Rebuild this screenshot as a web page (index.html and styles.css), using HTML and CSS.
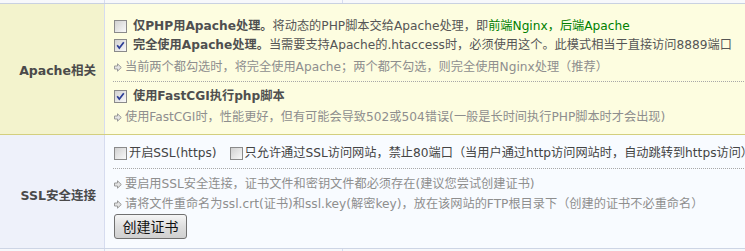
FILE: index.html
```html
<!DOCTYPE html>
<html>
<head>
<meta charset="utf-8">
<link rel="stylesheet" href="styles.css">
</head>
<body>
<div class="table">
  <div class="stub"><div class="s1"></div><div class="s2"></div><div class="s3"></div></div>

  <div class="row apache">
    <div class="label">Apache相关</div>
    <div class="content">
      <div class="group g1">
        <div class="line"><span class="cb"><svg width="13" height="13" viewBox="0 0 13 13"><defs><linearGradient id="cbg" x1="0" y1="0" x2="1" y2="1"><stop offset="0" stop-color="#cfcfcf"/><stop offset="1" stop-color="#fbfbfb"/></linearGradient></defs><rect x="0.5" y="0.5" width="12" height="12" fill="url(#cbg)" stroke="#8a8a8a"/></svg></span><b>仅PHP用Apache处理。</b>将动态的PHP脚本交给Apache处理，即<span class="green">前端Nginx，后端Apache</span></div>
        <div class="line"><span class="cb"><svg width="13" height="13" viewBox="0 0 13 13"><rect x="0.5" y="0.5" width="12" height="12" fill="url(#cbg)" stroke="#8a8a8a"/><path d="M3.2 6.3 L5.3 9 L9.8 3.3" fill="none" stroke="#2b3d96" stroke-width="1.7"/></svg></span><b>完全使用Apache处理。</b>当需要支持Apache的.htaccess时，必须使用这个。此模式相当于直接访问8889端口</div>
        <div class="hint first"><span class="arr"><svg width="8" height="9" viewBox="0 0 8 9"><path d="M0.5 3 H3.5 V0.8 L7.3 4.5 L3.5 8.2 V6 H0.5 Z" fill="#e4e4e4" stroke="#9a9a9a" stroke-width="1"/></svg></span>当前两个都勾选时，将完全使用Apache；两个都不勾选，则完全使用Nginx处理（推荐）</div>
      </div>
      <div class="group g2">
        <div class="line"><span class="cb"><svg width="13" height="13" viewBox="0 0 13 13"><rect x="0.5" y="0.5" width="12" height="12" fill="url(#cbg)" stroke="#8a8a8a"/><path d="M3.2 6.3 L5.3 9 L9.8 3.3" fill="none" stroke="#2b3d96" stroke-width="1.7"/></svg></span><b>使用FastCGI执行php脚本</b></div>
        <div class="hint second"><span class="arr"><svg width="8" height="9" viewBox="0 0 8 9"><path d="M0.5 3 H3.5 V0.8 L7.3 4.5 L3.5 8.2 V6 H0.5 Z" fill="#e4e4e4" stroke="#9a9a9a" stroke-width="1"/></svg></span>使用FastCGI时，性能更好，但有可能会导致502或504错误(一般是长时间执行PHP脚本时才会出现)</div>
      </div>
    </div>
  </div>

  <div class="row ssl">
    <div class="label ssl-label">SSL安全连接</div>
    <div class="content">
      <div class="group g3">
        <div class="line plain"><span class="cb tight"><svg width="13" height="13" viewBox="0 0 13 13"><rect x="0.5" y="0.5" width="12" height="12" fill="url(#cbg)" stroke="#8a8a8a"/></svg></span>开启SSL(https)<span class="cb tight second-cb"><svg width="13" height="13" viewBox="0 0 13 13"><rect x="0.5" y="0.5" width="12" height="12" fill="url(#cbg)" stroke="#8a8a8a"/></svg></span>只允许通过SSL访问网站，禁止80端口（当用户通过http访问网站时，自动跳转到https访问）</div>
      </div>
      <div class="group g4">
        <div class="hint"><span class="arr"><svg width="8" height="9" viewBox="0 0 8 9"><path d="M0.5 3 H3.5 V0.8 L7.3 4.5 L3.5 8.2 V6 H0.5 Z" fill="#e4e4e4" stroke="#9a9a9a" stroke-width="1"/></svg></span>要启用SSL安全连接，证书文件和密钥文件都必须存在(建议您尝试创建证书)</div>
        <div class="hint"><span class="arr"><svg width="8" height="9" viewBox="0 0 8 9"><path d="M0.5 3 H3.5 V0.8 L7.3 4.5 L3.5 8.2 V6 H0.5 Z" fill="#e4e4e4" stroke="#9a9a9a" stroke-width="1"/></svg></span>请将文件重命名为ssl.crt(证书)和ssl.key(解密key)，放在该网站的FTP根目录下（创建的证书不必重命名）</div>
        <button class="btn">创建证书</button>
      </div>
    </div>
  </div>

  <div class="stub bottom"><div class="s1"></div><div class="s2"></div><div class="s3"></div></div>
</div>
</body>
</html>
```
FILE: styles.css
```css
html, body {
  margin: 0;
  padding: 0;
  background: #ffffff;
  overflow: hidden;
}
.table {
  width: 900px;
  font-family: "DejaVu Sans", "Noto Sans CJK SC", sans-serif;
  font-size: 12.2px;
  color: #555555;
  white-space: nowrap;
}
.stub {
  display: flex;
  height: 3px;
  background: #f7f8fb;
}
.stub.bottom {
  height: 2px;
}
.stub .s1 {
  width: 104px;
  border-right: 1px solid #d6dcef;
}
.stub .s2 {
  width: 237px;
  border-right: 1px solid #d6dcef;
}
.stub .s3 {
  flex: 1;
}
.row {
  display: flex;
}
.row.apache {
  border-top: 1px solid #c9d1e1;
  border-bottom: 1px solid #d3cf7e;
  background: #fdfde0;
}
.row.ssl {
  background: #f8fbff;
  border-bottom: 1px solid #cdd5e5;
}
.label {
  width: 96px;
  padding-right: 8px;
  border-right: 1px solid #d6dcef;
  display: flex;
  align-items: center;
  justify-content: flex-end;
  font-weight: bold;
  font-size: 12.5px;
  color: #4a4a4a;
}
.apache .label {
  background: #f3f3cd;
}
.ssl .label {
  background: #eef1fa;
}
.ssl-label {
  padding-top: 5px;
}
.content {
  flex: 1;
  padding-left: 8px;
}
.group {
  border-bottom: 1px dotted #a8a8a8;
}
.g1 {
  padding-top: 13px;
  padding-bottom: 4px;
}
.g2 {
  border-bottom: none;
  padding-top: 5px;
  padding-bottom: 7px;
}
.g3 {
  padding-top: 9px;
  padding-bottom: 5px;
}
.g4 {
  border-bottom: none;
  padding-top: 5px;
  padding-bottom: 9px;
}
.line {
  height: 19px;
  line-height: 19px;
  display: flex;
  align-items: center;
}
.line b {
  color: #4f4f4f;
}
.line.plain {
  color: #444444;
}
.green {
  color: #008000;
}
.cb {
  display: inline-flex;
  width: 13px;
  height: 13px;
  margin-left: 1px;
  margin-right: 6px;
}
.cb.tight {
  margin-right: 2px;
}
.cb.second-cb {
  margin-left: 13px;
}
.hint {
  height: 20px;
  line-height: 20px;
  display: flex;
  align-items: center;
  color: #8e8e8e;
}
.hint.first {
  margin-top: 2px;
}
.hint.second {
  margin-top: 1px;
}
.arr {
  display: inline-flex;
  width: 8px;
  height: 9px;
  margin-left: 1px;
  margin-right: 3px;
}
.btn {
  display: block;
  margin-left: 1px;
  width: 73px;
  height: 25px;
  padding: 0;
  border: 1px solid #707070;
  border-radius: 3px;
  background: linear-gradient(#f6f6f6, #dedede 50%, #d0d0d0);
  font-family: "Noto Sans CJK SC", sans-serif;
  font-size: 14px;
  color: #111111;
  line-height: 23px;
}
```
